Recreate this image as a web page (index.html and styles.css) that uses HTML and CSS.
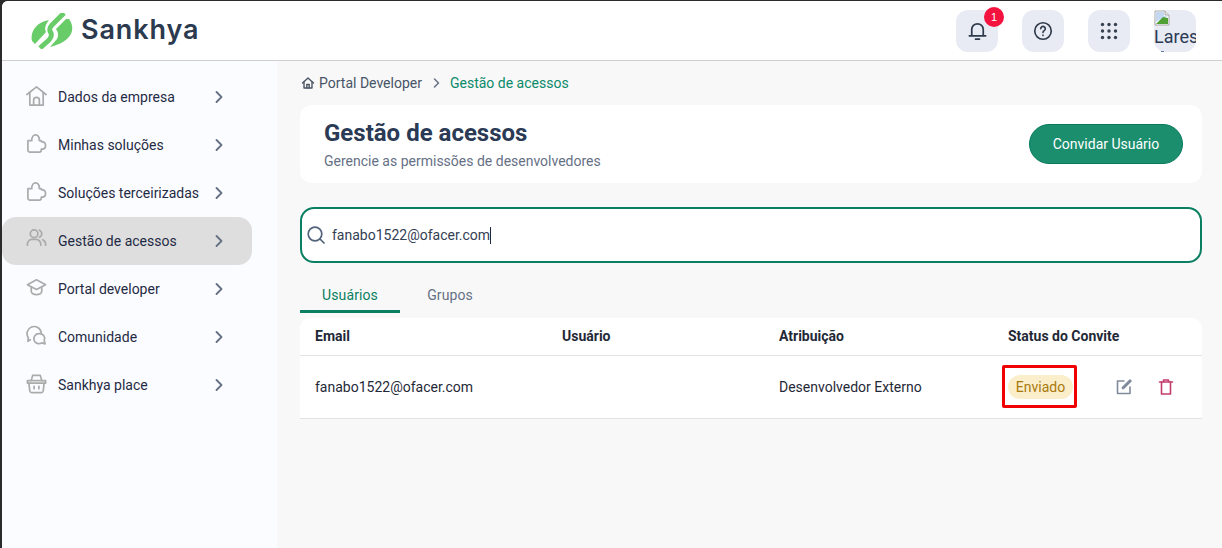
FILE: index.html
```html
<!DOCTYPE html>
<html lang="pt-BR">
<head>
<meta charset="utf-8">
<title>Gestão de acessos</title>
<link rel="stylesheet" href="styles.css">
</head>
<body>
<div class="app">
  <header class="topbar">
    <div class="brand">
      <svg class="brand-mark" viewBox="30 12 44 36" width="44" height="36">
        <path d="M49 19 C38 21 30 29 32 40 L35 43 L46 31 C44 27 46 23 49 19Z" fill="#68cc68"/>
        <path d="M64 12 L52 24 C49 27 49 29 51 32 C52 35 51 37 49 39 L40 47" fill="none" stroke="#68cc68" stroke-width="5"/>
        <path d="M69 18 C74 25 73 32 68 37 C63 42 57 44 50 46 L57 38 C59 34 58 31 56 28 L66 18 Z" fill="#68cc68"/>
      </svg>
      <span class="brand-name">Sankhya</span>
    </div>
    <div class="top-actions">
      <button class="top-btn">
        <svg viewBox="0 0 24 24" width="23" height="23" class="ic-dark"><path d="M6 17v-6a6 6 0 0 1 12 0v6"/><path d="M3.500 17.500h17"/><path d="M10 21h4"/></svg>
        <span class="badge">1</span>
      </button>
      <button class="top-btn">
        <svg viewBox="0 0 24 24" width="22" height="22" class="ic-dark"><circle cx="12" cy="12" r="9"/><path d="M9.500 9.500a2.500 2.500 0 1 1 3.800 2.100c-.8.500-1.300 1-1.300 1.900"/><path d="M12 16.500v.4"/></svg>
      </button>
      <button class="top-btn">
        <svg viewBox="0 0 18 18" width="18" height="18" class="ic-dots"><circle cx="2.500" cy="2.500" r="1.700"/><circle cx="9" cy="2.500" r="1.700"/><circle cx="15.500" cy="2.500" r="1.700"/><circle cx="2.500" cy="9" r="1.700"/><circle cx="9" cy="9" r="1.700"/><circle cx="15.500" cy="9" r="1.700"/><circle cx="2.500" cy="15.500" r="1.700"/><circle cx="9" cy="15.500" r="1.700"/><circle cx="15.500" cy="15.500" r="1.700"/></svg>
      </button>
      <div class="avatar">
        <div class="avatar-clip">
          <svg class="broken" viewBox="0 0 16 16" width="16" height="16"><path d="M1 1h10l4 4v10H1z" fill="#fff" stroke="#a8a8a8"/><path d="M11 1v4h4" fill="#e8e8e8" stroke="#a8a8a8"/><path d="M2 2h8v4l4 .5L7 9 2 12z" fill="#c4d8f4"/><path d="M2 14l7-7 5 1v6z" fill="#4f9f35"/></svg>
          <span class="avatar-alt">Lares</span>
          <span class="avatar-tick"></span>
        </div>
      </div>
    </div>
  </header>
  <div class="body">
    <nav class="sidebar">
      <a class="nav-item">
        <svg class="nav-ic" viewBox="0 0 22 22"><path d="M1 10 11 2l10 8"/><path d="M4 8v13h14V8"/><path d="M8 21v-5a3 3 0 0 1 6 0v5"/></svg>
        <span class="nav-label">Dados da empresa</span>
        <svg class="chev" viewBox="0 0 10 14"><path d="M2.500 2l5 5-5 5"/></svg>
      </a>
      <a class="nav-item">
        <svg class="nav-ic" viewBox="0 0 22 22"><path d="M2 8H6C6 4 8 2 10 2 12 2 14 4 14 8H16V9C19 9 20.500 11 20.500 13 20.500 15 19 17 16 17V18C16 19 15 20 14 20H4C3 20 2 19 2 18Z"/></svg>
        <span class="nav-label">Minhas soluções</span>
        <svg class="chev" viewBox="0 0 10 14"><path d="M2.500 2l5 5-5 5"/></svg>
      </a>
      <a class="nav-item">
        <svg class="nav-ic" viewBox="0 0 22 22"><path d="M2 8H6C6 4 8 2 10 2 12 2 14 4 14 8H16V9C19 9 20.500 11 20.500 13 20.500 15 19 17 16 17V18C16 19 15 20 14 20H4C3 20 2 19 2 18Z"/></svg>
        <span class="nav-label">Soluções terceirizadas</span>
        <svg class="chev" viewBox="0 0 10 14"><path d="M2.500 2l5 5-5 5"/></svg>
      </a>
      <a class="nav-item active">
        <svg class="nav-ic nudge" viewBox="0 0 22 22"><circle cx="8.500" cy="6" r="4"/><path d="M1.500 18v-1.500A5 5 0 0 1 6.500 12h4a5 5 0 0 1 5 5v1"/><path d="M14 2.300a4 4 0 0 1 0 7.400"/><path d="M17.500 12.300A5 5 0 0 1 20.500 17v1"/></svg>
        <span class="nav-label">Gestão de acessos</span>
        <svg class="chev" viewBox="0 0 10 14"><path d="M2.500 2l5 5-5 5"/></svg>
      </a>
      <a class="nav-item">
        <svg class="nav-ic" viewBox="0 0 22 22"><path d="M11 3 1.500 8l9.500 5 9.500-5z"/><path d="M5.500 10.500V15c0 2 2.500 3.500 5.500 3.500s5.500-1.500 5.500-3.500v-4.500"/></svg>
        <span class="nav-label">Portal developer</span>
        <svg class="chev" viewBox="0 0 10 14"><path d="M2.500 2l5 5-5 5"/></svg>
      </a>
      <a class="nav-item">
        <svg class="nav-ic" viewBox="0 0 22 22"><path d="M4.500 15.500 2 17l.5-3.500A7.500 7.500 0 1 1 16 8"/><path d="M13.500 9a5.300 5.300 0 1 0 3 9.700l3.500 1-.9-3.300A5.300 5.300 0 0 0 13.500 9z"/></svg>
        <span class="nav-label">Comunidade</span>
        <svg class="chev" viewBox="0 0 10 14"><path d="M2.500 2l5 5-5 5"/></svg>
      </a>
      <a class="nav-item">
        <svg class="nav-ic" viewBox="0 0 22 22"><path d="M1.500 8h19v2.500h-19z"/><path d="M3 10.500 4 19a2 2 0 0 0 2 1.500h10a2 2 0 0 0 2-1.500l1-8.500"/><path d="M5.500 8 7 2.500h8L16.500 8"/><path d="M8.500 14v2.500"/><path d="M13.500 14v2.500"/></svg>
        <span class="nav-label">Sankhya place</span>
        <svg class="chev" viewBox="0 0 10 14"><path d="M2.500 2l5 5-5 5"/></svg>
      </a>
    </nav>
    <main class="content">
      <div class="crumbs">
        <svg class="crumb-home" viewBox="0 0 14 14" width="14" height="14"><path d="M1.500 7 7 2l5.500 5"/><path d="M3 6v6h8V6"/><path d="M5.800 12V8.500h2.400V12"/></svg>
        <span class="crumb">Portal Developer</span>
        <svg class="crumb-sep" viewBox="0 0 10 14" width="10" height="14"><path d="M2.500 3l4 4-4 4"/></svg>
        <span class="crumb-current">Gestão de acessos</span>
      </div>
      <section class="page-head">
        <div>
          <h1 class="page-title">Gestão de acessos</h1>
          <p class="page-sub">Gerencie as permissões de desenvolvedores</p>
        </div>
        <button class="invite">Convidar Usuário</button>
      </section>
      <div class="search">
        <svg class="search-ic" viewBox="0 0 20 20" width="20" height="20"><circle cx="9" cy="9" r="6.800"/><path d="M14 14l4 4"/></svg>
        <span class="search-text">fanabo1522@ofacer.com</span><span class="caret"></span>
      </div>
      <div class="tabs">
        <div class="tab on">Usuários</div>
        <div class="tab">Grupos</div>
      </div>
      <div class="table">
        <div class="row head">
          <div class="c-email">Email</div>
          <div class="c-user">Usuário</div>
          <div class="c-role">Atribuição</div>
          <div class="c-status">Status do Convite</div>
        </div>
        <div class="row">
          <div class="c-email">fanabo1522@ofacer.com</div>
          <div class="c-user"></div>
          <div class="c-role">Desenvolvedor Externo</div>
          <div class="c-status status-cell">
            <span class="pill">Enviado</span>
            <svg class="act act-edit" viewBox="0 0 18 18" width="18" height="18"><path d="M9 3H2.500v12.500H15V9"/><path d="M7.500 10.500v-1L15 2l1 1-7.500 7.500z"/></svg>
            <svg class="act act-del" viewBox="0 0 18 18" width="18" height="18"><path d="M2.500 4h13"/><path d="M6.500 3.500V2h5v1.500"/><path d="M4.500 4v12h9V4"/></svg>
            <span class="mark"></span>
          </div>
        </div>
      </div>
    </main>
  </div>
</div>
</body>
</html>
```

FILE: styles.css
```css
* { box-sizing: border-box; }
html, body { margin: 0; height: 100%; }
body {
  background: #2b2b2b;
  padding: 1px 0 0 2px;
  font-family: Roboto, "Liberation Sans", sans-serif;
  overflow: hidden;
}
.app {
  height: 547px;
  display: flex;
  flex-direction: column;
  background: #f8f8f8;
  border-top-left-radius: 6px;
  overflow: hidden;
}
.topbar {
  height: 60px;
  flex: none;
  background: #fff;
  border-bottom: 1px solid #cfcfcf;
  display: flex;
  align-items: center;
  justify-content: space-between;
  padding: 0 26px 0 28px;
}
.brand { display: flex; align-items: center; gap: 7px; }
.brand-mark { display: block; }
.brand-name {
  font-family: Inter, Roboto, sans-serif;
  font-weight: 600;
  font-size: 27px;
  line-height: 32px;
  letter-spacing: 0.9px;
  color: #2b3a4e;
  margin-top: -2px;
}
.top-actions { display: flex; align-items: center; gap: 24px; }
.top-btn {
  position: relative;
  width: 42px;
  height: 42px;
  border: 0;
  padding: 0;
  border-radius: 12px;
  background: #e8ebf3;
  display: flex;
  align-items: center;
  justify-content: center;
}
.ic-dark { fill: none; stroke: #2f3b4c; stroke-width: 1.8; stroke-linecap: round; stroke-linejoin: round; }
.ic-dots { fill: #374151; }
.badge {
  position: absolute;
  top: -3px;
  right: -6px;
  width: 20px;
  height: 20px;
  border-radius: 50%;
  background: #f4123f;
  color: #fff;
  font-size: 11px;
  line-height: 20px;
  text-align: center;
}
.avatar {
  width: 42px;
  height: 42px;
  border-radius: 12px;
  background: #e8ebf3;
}
.avatar-clip {
  position: relative;
  width: 42px;
  height: 42px;
  overflow: hidden;
  font-size: 18px;
  line-height: 22px;
  color: #2b3a55;
}
.broken { display: block; }
.avatar-alt { display: block; white-space: nowrap; }
.avatar-tick {
  position: absolute;
  left: 7px;
  bottom: 0;
  width: 3px;
  height: 1px;
  background: #5b7fa8;
}
.body { flex: 1; display: flex; min-height: 0; }
.sidebar {
  width: 275px;
  flex: none;
  background: #fbfcff;
  padding-top: 12px;
  display: flex;
  flex-direction: column;
}
.nav-item {
  width: 250px;
  height: 48px;
  border-radius: 14px;
  display: flex;
  align-items: center;
  padding-left: 24px;
  color: #1f2a44;
  font-size: 14px;
}
.nav-item.active { background: #dedede; }
.nav-ic {
  width: 21px;
  height: 21px;
  flex: none;
  margin-top: -3px;
  fill: none;
  stroke: #ababab;
  stroke-width: 1.800;
  stroke-linecap: round;
  stroke-linejoin: round;
}
.nav-ic.nudge { margin-top: -5px; }
.nav-label { width: 156px; margin-left: 11px; white-space: nowrap; }
.chev {
  width: 10px;
  height: 14px;
  flex: none;
  fill: none;
  stroke: #667085;
  stroke-width: 1.800;
  stroke-linecap: round;
  stroke-linejoin: round;
}
.content { flex: 1; min-width: 0; padding: 0 20px 0 23px; }
.crumbs {
  height: 44px;
  display: flex;
  align-items: center;
  font-size: 14px;
  padding-left: 1px;
}
.crumb-home { fill: none; stroke: #4b5565; stroke-width: 1.400; stroke-linecap: round; stroke-linejoin: round; margin-right: 4px; }
.crumb { color: #475467; }
.crumb-sep { fill: none; stroke: #667085; stroke-width: 1.500; margin: 0 8px 0 10px; stroke-linecap: round; stroke-linejoin: round; }
.crumb-current { color: #0a8a6a; }
.page-head {
  height: 78px;
  background: #fff;
  border-radius: 12px;
  display: flex;
  align-items: center;
  justify-content: space-between;
  padding: 0 19px 0 24px;
}
.page-title {
  margin: 0;
  font-size: 24px;
  line-height: 30px;
  font-weight: 700;
  color: #2b3a55;
}
.page-sub {
  margin: 3px 0 0;
  font-size: 14px;
  line-height: 20px;
  color: #667085;
}
.invite {
  width: 154px;
  height: 40px;
  margin-top: -1px;
  border: 1px solid #0a7a5e;
  border-radius: 20px;
  background: #1b8e6e;
  color: #fff;
  font-family: inherit;
  font-size: 14px;
  font-weight: 400;
  padding: 0;
}
.search {
  margin-top: 24px;
  height: 56px;
  border: 2px solid #0a7f62;
  border-radius: 14px;
  background: #fff;
  display: flex;
  align-items: center;
  padding-left: 4px;
  font-size: 14px;
  color: #344054;
}
.search-ic { fill: none; stroke: #52637a; stroke-width: 1.700; stroke-linecap: round; margin-right: 6px; }
.caret { width: 1px; height: 17px; background: #1f2a44; }
.tabs { display: flex; margin-top: 12px; height: 38px; }
.tab {
  width: 100px;
  height: 38px;
  font-size: 14px;
  font-weight: 400;
  letter-spacing: 0.1px;
  line-height: 40px;
  text-align: center;
  color: #667085;
}
.tab.on { color: #0a7f62; border-bottom: 3px solid #0a7f62; }
.table {
  margin-top: 5px;
  background: #fff;
  border-radius: 10px 10px 0 0;
}
.row {
  display: flex;
  align-items: center;
  height: 63px;
  padding-left: 15px;
  font-size: 14px;
  color: #1f2937;
  border-bottom: 1px solid #e3e3e3;
}
.row.head {
  height: 38px;
  padding-bottom: 2px;
  font-weight: 700;
}
.c-email { width: 247px; }
.c-user { width: 217px; }
.c-role { width: 229px; }
.c-status { flex: 1; }
.status-cell { position: relative; display: flex; align-items: center; }
.pill {
  height: 24px;
  width: 65px;
  border-radius: 12px;
  background: #fbeecb;
  color: #a8790c;
  line-height: 24px;
  text-align: center;
}
.act { flex: none; fill: none; stroke-width: 1.600; stroke-linecap: round; stroke-linejoin: round; }
.act-edit { stroke: #7f8a9c; margin-left: 42px; }
.act-del { stroke: #c43c6c; margin-left: 24px; }
.mark {
  position: absolute;
  left: -6px;
  top: -10px;
  width: 75px;
  height: 43px;
  border: 3px solid #f00000;
  border-radius: 2px;
}
```
